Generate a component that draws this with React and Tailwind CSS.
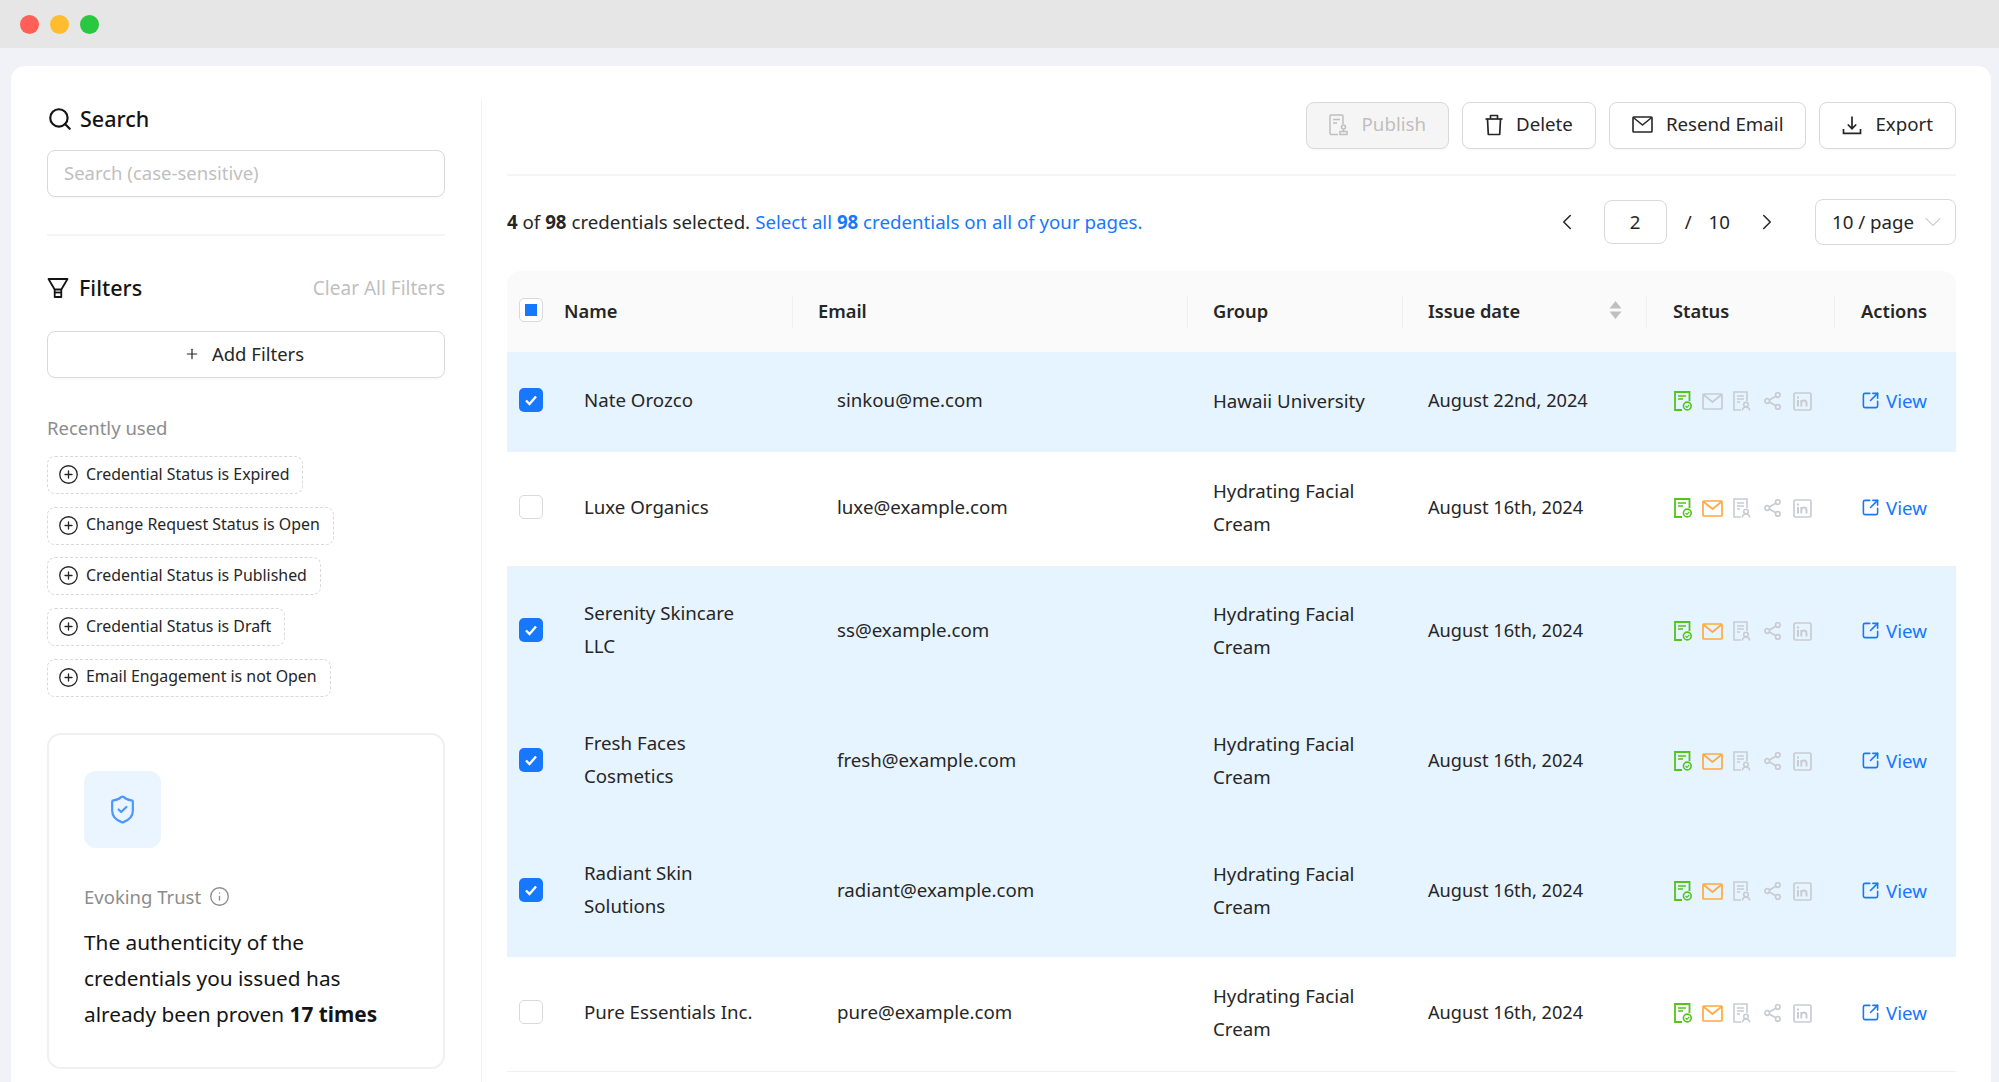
import { Search, CirclePlus, Info, ShieldCheck, SquareArrowOutUpRight, ChevronLeft, ChevronRight, ChevronDown, Plus } from 'lucide-react';

const rows = [
  { name: 'Nate Orozco', email: 'sinkou@me.com', group: 'Hawaii University', date: 'August 22nd, 2024', selected: true, opened: false },
  { name: 'Luxe Organics', email: 'luxe@example.com', group: 'Hydrating Facial Cream', date: 'August 16th, 2024', selected: false, opened: true },
  { name: 'Serenity Skincare LLC', email: 'ss@example.com', group: 'Hydrating Facial Cream', date: 'August 16th, 2024', selected: true, opened: true },
  { name: 'Fresh Faces Cosmetics', email: 'fresh@example.com', group: 'Hydrating Facial Cream', date: 'August 16th, 2024', selected: true, opened: true },
  { name: 'Radiant Skin Solutions', email: 'radiant@example.com', group: 'Hydrating Facial Cream', date: 'August 16th, 2024', selected: true, opened: true },
  { name: 'Pure Essentials Inc.', email: 'pure@example.com', group: 'Hydrating Facial Cream', date: 'August 16th, 2024', selected: false, opened: true },
];

const chips = [
  'Credential Status is Expired',
  'Change Request Status is Open',
  'Credential Status is Published',
  'Credential Status is Draft',
  'Email Engagement is not Open',
];

function FunnelIcon() {
  return (
    <svg width="22" height="22" viewBox="0 0 22 22" fill="none" stroke="#141414" strokeWidth="1.8" strokeLinejoin="round">
      <path d="M1.5 2h19l-6.2 10.5H7.7z" />
      <path d="M7.7 12.5V20h6.6v-7.5" />
      <path d="M7.7 15.5h6.6" />
    </svg>
  );
}

function DocStamp() {
  return (
    <svg width="20" height="22" viewBox="0 0 20 22" fill="none" stroke="#bfbfbf" strokeWidth="1.5">
      <path d="M9 20.5H2a1 1 0 0 1-1-1V2a1 1 0 0 1 1-1h11a1 1 0 0 1 1 1v8" />
      <path d="M4 5.5h7M4 9h4" />
      <circle cx="14.5" cy="13" r="2" />
      <path d="M14.5 15v2M11 17.5h7v3h-7z" />
    </svg>
  );
}

function TrashIcon() {
  return (
    <svg width="18" height="22" viewBox="0 0 18 22" fill="none" stroke="#262626" strokeWidth="1.7" strokeLinejoin="round">
      <path d="M0.500 5h17" />
      <path d="M5.500 5V1.500h7V5" />
      <path d="M2.500 5l.8 15.500h11.400L15.500 5" />
    </svg>
  );
}

function MailIcon({ color = '#262626', sw = 1.6 }) {
  return (
    <svg width="21" height="17" viewBox="0 0 21 17" fill="none" stroke={color} strokeWidth={sw} strokeLinejoin="round">
      <rect x="1" y="1" width="19" height="15" rx="0.8" />
      <path d="M1.3 1.5l9.2 7.5 9.2-7.5" />
    </svg>
  );
}

function ExportIcon() {
  return (
    <svg width="20" height="20" viewBox="0 0 20 20" fill="none" stroke="#262626" strokeWidth="1.7">
      <path d="M10 1.5v12M5.8 9.5l4.2 4.2 4.2-4.2" />
      <path d="M1.5 14v4.3h17V14" />
    </svg>
  );
}

function CertIcon() {
  return (
    <svg width="18" height="20" viewBox="0 0 18 20" fill="none" stroke="#52c41a">
      <path d="M8 19H1V1h14.500v9" strokeWidth="1.800" />
      <path d="M4 5h8M4 8h5" strokeWidth="1.600" />
      <circle cx="13.300" cy="15" r="3.900" strokeWidth="1.600" />
      <path d="M11.500 15l1.400 1.400 2.300-2.600" strokeWidth="1.200" />
    </svg>
  );
}

function DocPerson() {
  return (
    <svg width="18" height="20" viewBox="0 0 18 20" fill="none" stroke="#c8ccd2" strokeWidth="1.600">
      <path d="M8 19H1V1h13v9" />
      <path d="M4 5h7M4 8h7M4 11h3" />
      <circle cx="13" cy="13.500" r="2.300" />
      <path d="M9.300 19.500c.4-2.400 1.800-3.500 3.700-3.500s3.300 1.100 3.700 3.500" />
    </svg>
  );
}

function ShareIcon() {
  return (
    <svg width="17" height="18" viewBox="0 0 17 18" fill="none" stroke="#c8ccd2" strokeWidth="1.700">
      <circle cx="3.200" cy="9" r="2.300" />
      <circle cx="13.800" cy="3" r="2.300" />
      <circle cx="13.800" cy="15" r="2.300" />
      <path d="M5.300 7.900l6.500-3.700M5.300 10.100l6.500 3.700" />
    </svg>
  );
}

function LinkedinBox() {
  return (
    <svg width="19" height="19" viewBox="0 0 19 19" fill="none" stroke="#c8ccd2">
      <rect x="1" y="1" width="17" height="17" rx="1.500" strokeWidth="1.700" />
      <path d="M5 8v6.500M5 4.600v1.800M8.300 14.500V8M8.300 10.800c.5-2.800 5.200-3.200 5.200.5v3.200" strokeWidth="2" />
    </svg>
  );
}

function Btn({ children, disabled }) {
  return (
    <button className={`h-[47px] px-[22px] pb-0.5 flex items-center gap-[13px] rounded-lg border border-[#d9d9d9] shadow-[0_2px_0_rgba(0,0,0,0.02)] text-[18.7px] ${disabled ? 'bg-[#f5f5f5] text-[#bfbfbf]' : 'bg-white text-[#262626]'}`}>
      {children}
    </button>
  );
}

function Check({ on }) {
  if (on) {
    return (
      <span className="w-6 h-6 rounded-[5px] bg-[#1677ff] flex items-center justify-center">
        <svg width="16" height="16" viewBox="0 0 16 16" fill="none" stroke="white" strokeWidth="2.400">
          <path d="M3 8.500l3.500 3.500L13 4.500" />
        </svg>
      </span>
    );
  }
  return <span className="block w-6 h-6 rounded-[5px] bg-white border border-[#d9d9d9]" />;
}

function Th({ children, className = '', divider = true }) {
  return (
    <th className={`relative font-semibold text-left pb-[3px] text-[18.3px] ${className}`}>
      {children}
      {divider && <span className="absolute right-0 top-1/2 -translate-y-1/2 h-8 w-px bg-[#f0f0f0]" />}
    </th>
  );
}

export default function App() {
  return (
    <div className="h-[1082px] overflow-hidden flex flex-col bg-[#f0f2f7] font-['Noto_Sans',sans-serif] text-[#262626]">
      <div className="h-12 shrink-0 bg-[#e6e6e6] flex items-center gap-[11px] pl-5">
        <span className="w-[19px] h-[19px] rounded-full bg-[#ff5f57]" />
        <span className="w-[19px] h-[19px] rounded-full bg-[#febc2e]" />
        <span className="w-[19px] h-[19px] rounded-full bg-[#28c840]" />
      </div>

      <div className="flex-1 ml-[11px] mr-2 mt-[18px] bg-white rounded-t-[14px] flex min-h-0">
        {/* Sidebar */}
        <aside className="w-[471px] shrink-0 mt-[34px] pl-9 pr-[36px] border-r border-[#f0f0f0]">
          <div className="h-[38px] flex items-center gap-[7px] text-[21.5px] font-medium text-[#141414]">
            <Search size={26} strokeWidth={2} /> Search
          </div>
          <input
            placeholder="Search (case-sensitive)"
            className="mt-3 h-[47px] w-full rounded-lg border border-[#d9d9d9] px-4 pb-0.5 text-[18.5px] placeholder:text-[#bfbfbf] outline-none shadow-[0_2px_0_rgba(0,0,0,0.02)]"
          />
          <div className="mt-[37px] h-0.5 bg-[#f5f5f5]" />
          <div className="mt-[33px] h-[38px] flex items-center gap-[10px] text-[21.5px] font-medium text-[#141414]">
            <FunnelIcon /> Filters
            <span className="ml-auto text-[19px] font-normal text-[#bfbfbf]">Clear All Filters</span>
          </div>
          <button className="mt-6 h-[47px] w-full pb-0.5 rounded-lg border border-[#d9d9d9] shadow-[0_2px_0_rgba(0,0,0,0.02)] flex items-center justify-center gap-[12px] pr-1 text-[18.5px]">
            <Plus size={16} strokeWidth={1.800} /> Add Filters
          </button>
          <div className="mt-[35px] h-[30px] flex items-center text-[18.5px] text-[#8c8c8c]">Recently used</div>
          <div className="mt-[13px] flex flex-col items-start gap-[12.7px]">
            {chips.map(c => (
              <div key={c} className="h-[38px] flex items-center gap-[7px] pl-[10px] pr-[13px] pb-px rounded-lg border border-dashed border-[#d9d9d9] text-[15.9px]">
                <CirclePlus size={21} strokeWidth={1.500} /> {c}
              </div>
            ))}
          </div>
          <div className="mt-9 rounded-[14px] border-2 border-[#f0f0f0] pl-[35px] pt-9 pb-[35px] pr-[42px]">
            <div className="w-[77px] h-[77px] rounded-xl bg-[#eaf5ff] flex items-center justify-center">
              <ShieldCheck size={31} strokeWidth={1.700} className="text-[#4b96ff]" />
            </div>
            <div className="mt-[34px] h-[30px] flex items-center gap-2 text-[18.5px] text-[#8c8c8c]">
              Evoking Trust <Info size={21} strokeWidth={1.500} />
            </div>
            <p className="mt-3 text-[20.8px] leading-9 text-[#141414]">
              The authenticity of the credentials you issued has already been proven <b className="font-bold">17 times</b>
            </p>
          </div>
        </aside>

        {/* Main */}
        <main className="flex-1 min-w-0 pl-[25px] pr-[35px] pt-9">
          <div className="flex justify-end gap-[13px]">
            <Btn disabled><DocStamp /> Publish</Btn>
            <Btn><TrashIcon /> Delete</Btn>
            <Btn><MailIcon /> Resend Email</Btn>
            <Btn><ExportIcon /> Export</Btn>
          </div>
          <div className="mt-[25px] h-0.5 bg-[#f5f5f5]" />
          <div className="mt-6 h-[46px] pb-0.5 flex items-center text-[18.7px]">
            <span><b className="font-bold">4</b> of <b className="font-bold">98</b> credentials selected.</span>
            <span className="ml-[5px] text-[#1677ff]">Select all <b className="font-bold">98</b> credentials on all of your pages.</span>
            <div className="ml-auto flex items-center">
              <ChevronLeft size={26} strokeWidth={1.400} />
              <span className="ml-6 w-[63px] h-11 rounded-lg border border-[#d9d9d9] flex items-center justify-center">2</span>
              <span className="ml-[18px]">/</span>
              <span className="ml-[17px]">10</span>
              <ChevronRight size={26} strokeWidth={1.400} className="ml-6" />
              <div className="ml-[35px] w-[141px] h-[46px] rounded-lg border border-[#d9d9d9] flex items-center pl-4 pr-2 justify-between">
                10 / page <ChevronDown size={28} strokeWidth={0.900} className="text-[#bfbfbf]" />
              </div>
            </div>
          </div>

          <table className="mt-[25px] w-[1449px] table-fixed border-collapse text-[18.7px] leading-[33px]">
            <colgroup>
              <col className="w-[57px]" />
              <col className="w-[229px]" />
              <col className="w-[395px]" />
              <col className="w-[215px]" />
              <col className="w-[244px]" />
              <col className="w-[188px]" />
              <col className="w-[121px]" />
            </colgroup>
            <thead>
              <tr className="h-[81px] bg-[#fafafa]">
                <th className="pl-3 pb-[3px] rounded-tl-[14px]">
                  <span className="w-6 h-6 rounded-[5px] bg-white border border-[#d9d9d9] flex items-center justify-center">
                    <span className="w-3 h-3 bg-[#1677ff]" />
                  </span>
                </th>
                <Th>Name</Th>
                <Th className="pl-[25px]">Email</Th>
                <Th className="pl-[25px]">Group</Th>
                <Th className="pl-[25px]">
                  <div className="flex items-center justify-between pr-[25px]">
                    Issue date
                    <svg width="13" height="20" viewBox="0 0 13 20" fill="#bfbfbf">
                      <path d="M6.500 1l6 7.500H.500zM6.500 19L.500 11.500h12z" />
                    </svg>
                  </div>
                </Th>
                <Th className="pl-[26px]">Status</Th>
                <Th className="pl-[26px] rounded-tr-[14px]" divider={false}>Actions</Th>
              </tr>
            </thead>
            <tbody>
              {rows.map(r => (
                <tr key={r.email} className={`h-[100px] ${r.selected ? 'bg-[#e6f4ff]' : 'border-b border-[#f0f0f0]'}`}>
                  <td className="pl-3 pb-1"><Check on={r.selected} /></td>
                  <td className="pl-5 pt-[29px] pb-[35px]"><div className="max-w-[172px]">{r.name}</div></td>
                  <td className="pl-11 pb-[5px]">{r.email}</td>
                  <td className="pl-[25px] pr-6 pt-[22px] pb-[26px]">{r.group}</td>
                  <td className="pl-[25px] pb-[3px] text-[18.2px]">{r.date}</td>
                  <td className="pl-[27px] pb-0.5">
                    <div className="flex items-center">
                      <CertIcon />
                      <span className="ml-[10px] flex"><MailIcon color={r.opened ? '#ffa940' : '#c8ccd2'} sw={1.700} /></span>
                      <span className="ml-[10px] flex"><DocPerson /></span>
                      <span className="ml-[13px] flex"><ShareIcon /></span>
                      <span className="ml-3 flex"><LinkedinBox /></span>
                    </div>
                  </td>
                  <td className="pl-[26px] pb-[3px]">
                    <div className="flex items-center gap-[6px] text-[#1677ff]">
                      <SquareArrowOutUpRight size={19} strokeWidth={2} /> View
                    </div>
                  </td>
                </tr>
              ))}
            </tbody>
          </table>
        </main>
      </div>
    </div>
  );
}
